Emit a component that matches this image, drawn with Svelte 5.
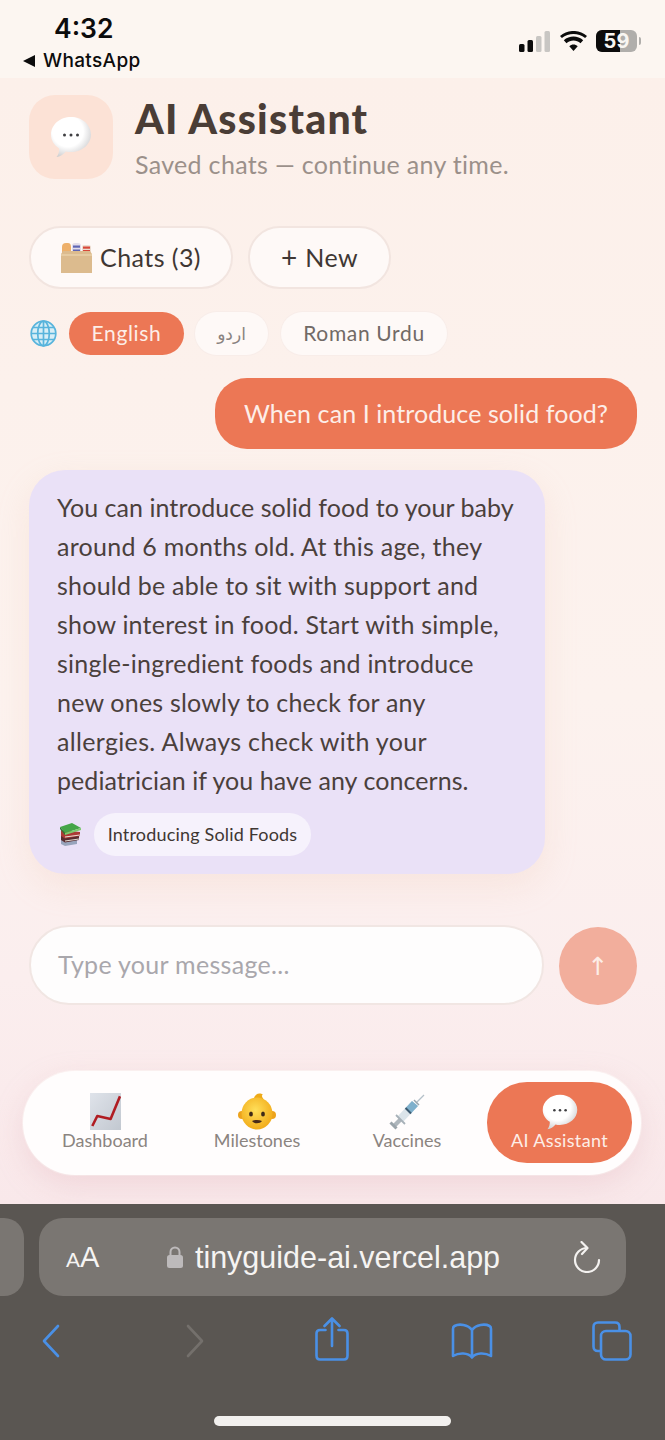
<script>
  const lines = [
    { text: 'You can introduce solid food to your baby', track: 0.05 },
    { text: 'around 6 months old. At this age, they', track: 0.26 },
    { text: 'should be able to sit with support and', track: 0.23 },
    { text: 'show interest in food. Start with simple,', track: 0.22 },
    { text: 'single-ingredient foods and introduce', track: 0.23 },
    { text: 'new ones slowly to check for any', track: 0.2 },
    { text: 'allergies. Always check with your', track: 0.34 },
    { text: 'pediatrician if you have any concerns.', track: 0.07 }
  ];
</script>

{#snippet bubble(size)}
  <svg width={size} height={size} viewBox="0 0 44 44" aria-hidden="true">
    <defs>
      <radialGradient id="bub" cx="0.42" cy="0.36" r="0.7">
        <stop offset="0.55" stop-color="#ffffff" />
        <stop offset="1" stop-color="#c9c9cb" />
      </radialGradient>
    </defs>
    <path d="M22 2C33 2 42 9.800 42 19.500C42 29.200 33 37 22 37C20 37 18.500 36.800 16.800 36.400C14.500 39.300 11 41.500 7.500 42C9.500 39.500 10.300 36.500 10.200 33.400C5 30.200 2 25.200 2 19.500C2 9.800 11 2 22 2Z" fill="url(#bub)" />
    <circle cx="15.500" cy="20" r="1.500" fill="#3f3f42" />
    <circle cx="22" cy="20" r="1.500" fill="#3f3f42" />
    <circle cx="28.500" cy="20" r="1.500" fill="#3f3f42" />
  </svg>
{/snippet}

<div class="screen">
  <header class="status">
    <div class="status-left">
      <div class="time">4:32</div>
      <div class="back-app"><span class="tri"></span>WhatsApp</div>
    </div>
    <div class="status-right">
      <svg width="32" height="21" viewBox="0 0 32 21" aria-hidden="true">
        <rect x="0" y="13" width="5.500" height="8" rx="1.500" fill="#0c0c0c" />
        <rect x="8.500" y="9" width="5.500" height="12" rx="1.500" fill="#0c0c0c" />
        <rect x="17" y="5" width="5.500" height="16" rx="1.500" fill="#c8c6c3" />
        <rect x="25.500" y="0" width="5.500" height="21" rx="1.500" fill="#c8c6c3" />
      </svg>
      <svg width="27" height="20" viewBox="0 0 27 20" aria-hidden="true">
        <path d="M13.500 20L9.300 15.200C11.700 13 15.300 13 17.700 15.200Z M6.500 12.200L3.800 9.200C9.300 4.200 17.700 4.200 23.200 9.200L20.500 12.200C16.500 8.700 10.500 8.700 6.500 12.200Z M1.900 7.100L0 4.900C7.700 -1.700 19.300 -1.700 27 4.900L25.100 7.100C18.500 1.600 8.500 1.600 1.900 7.100Z" fill="#0c0c0c" />
      </svg>
      <div class="battery">
        <span class="bat-fill"></span>
        <span class="bat-num">59</span>
        <span class="bat-tip"></span>
      </div>
    </div>
  </header>

  <main class="page">
    <section class="head">
      <div class="head-icon">{@render bubble(44)}</div>
      <div class="head-text">
        <h1>AI Assistant</h1>
        <p>Saved chats — continue any time.</p>
      </div>
    </section>

    <section class="actions">
      <button class="act act-chats">
        <svg width="31" height="31" viewBox="0 0 31 31" aria-hidden="true">
          <path d="M1 11V5Q1 1 5 1H7Q10 1 10 5V11Z" fill="#eeb06a" />
          <path d="M11 11V4Q11 1 14 1H17Q20 1 20 4V11Z" fill="#e2dcea" />
          <rect x="12" y="3.500" width="7" height="2.200" fill="#5f66b4" />
          <rect x="12" y="7.500" width="7" height="2.200" fill="#5f66b4" />
          <path d="M21 11V5Q21 3 23 3H27Q30 3 30 5V11Z" fill="#ecdcd0" />
          <rect x="22" y="4.500" width="7" height="2.200" fill="#d8483a" />
          <rect x="22" y="8" width="7" height="2.200" fill="#d8483a" />
          <path d="M2 9H29L31 12V31H0V12Z" fill="#dcbb8e" />
          <path d="M0 12H31V14H0Z" fill="#e6cba2" />
        </svg>
        <span class="act-label">Chats (3)</span>
      </button>
      <button class="act act-new"><span class="plus">+</span> <span class="act-label">New</span></button>
    </section>

    <section class="langs">
      <svg width="27" height="27" viewBox="0 0 27 27" fill="none" stroke="#58b4dc" stroke-width="1.700" aria-hidden="true">
        <circle cx="13.500" cy="13.500" r="12.300" fill="#d8eef6" />
        <ellipse cx="13.500" cy="13.500" rx="5.800" ry="12.300" />
        <path d="M13.500 1.200V25.800M1.200 13.500H25.800M3 7.500H24M3 19.500H24" />
      </svg>
      <span class="chip chip-on"><span class="chip-label">English</span></span>
      <span class="chip chip-urdu" dir="rtl">اردو</span>
      <span class="chip chip-roman"><span class="chip-label">Roman Urdu</span></span>
    </section>

    <div class="user-row">
      <div class="user-msg"><span class="user-label">When can I introduce solid food?</span></div>
    </div>

    <article class="ai-msg">
      <div class="ai-text">
        {#each lines as line}
          <div style="letter-spacing: {line.track}px">{line.text}</div>
        {/each}
      </div>
      <div class="source">
        <svg class="books" width="22" height="23" viewBox="0 0 22 23" aria-hidden="true">
          <path d="M2 15L18 17V21L6 23L2 21Z" fill="#98a4bc" />
          <path d="M2 11L20 13V17L6 19.500L2 17Z" fill="#5a2c30" />
          <path d="M6 17.500L20 15.500V16.500L6 18.500Z" fill="#e6dcd2" />
          <path d="M2 7L21 9V13L6 15.500L2 13Z" fill="#ac3a36" />
          <path d="M6 13.500L21 11.500V12.500L6 14.500Z" fill="#eadfd6" />
          <path d="M1 4L13 0L22 5L6 10Z" fill="#45a548" />
          <path d="M1 4L6 10V12L1 6Z" fill="#2c7a34" />
          <path d="M6 10L22 5V7L6 12Z" fill="#7ccb6c" />
        </svg>
        <span class="source-chip"><span class="source-label">Introducing Solid Foods</span></span>
      </div>
    </article>

    <section class="composer">
      <div class="input">Type your message...</div>
      <button class="send" aria-label="Send">↑</button>
    </section>

    <nav class="nav">
      <div class="nav-item">
        <svg class="nav-ico" width="31" height="37" viewBox="0 0 31 37" aria-hidden="true">
          <defs>
            <linearGradient id="chartbg" x1="0" y1="0" x2="1" y2="1">
              <stop offset="0" stop-color="#dfe3ea" />
              <stop offset="1" stop-color="#c2c8d0" />
            </linearGradient>
          </defs>
          <rect x="0" y="0" width="31" height="37" fill="url(#chartbg)" />
          <path d="M2.300 33L7.300 23L20.600 26L30 3.300" fill="none" stroke="#b01c22" stroke-width="2.600" stroke-linejoin="round" />
        </svg>
        <span>Dashboard</span>
      </div>
      <div class="nav-item">
        <svg class="nav-ico" width="40" height="37" viewBox="0 0 40 37" aria-hidden="true">
          <defs>
            <radialGradient id="babyf" cx="0.45" cy="0.4" r="0.7">
              <stop offset="0" stop-color="#ffdf5a" />
              <stop offset="1" stop-color="#f0a410" />
            </radialGradient>
          </defs>
          <circle cx="5" cy="22" r="4" fill="#eda31c" />
          <circle cx="35" cy="22" r="4" fill="#eda31c" />
          <path d="M17 5C18 1 23 -1 26 2C24 2 25 4 27 7Z" fill="#eeaa18" />
          <ellipse cx="20" cy="20.500" rx="15.500" ry="16" fill="url(#babyf)" />
          <ellipse cx="14" cy="21" rx="1.900" ry="2.600" fill="#3f2a18" />
          <ellipse cx="26" cy="21" rx="1.900" ry="2.600" fill="#3f2a18" />
          <path d="M15 28C18 26.500 22 26.500 25 28C23 31 17 31 15 28Z" fill="#4a2a18" />
        </svg>
        <span>Milestones</span>
      </div>
      <div class="nav-item">
        <svg class="nav-ico" width="36" height="37" viewBox="0 0 36 37" aria-hidden="true">
          <path d="M27 10L35 2" stroke="#b4c0c8" stroke-width="1.200" />
          <path d="M8 24L23 8L29 13L14 29Z" fill="#dbe4ea" />
          <path d="M16.500 15L23 8L29 13L22 20.500Z" fill="#7fb0cc" />
          <path d="M16.500 15L22 20.500" stroke="#3d5a70" stroke-width="2" />
          <path d="M25 7L30 12" stroke="#98a6ae" stroke-width="1.500" />
          <path d="M10 25L13 28L7 34L4 31Z" fill="#aeb6bc" />
          <path d="M1.500 29.500L7.500 35.500" stroke="#9aa4aa" stroke-width="3" />
          <path d="M7 22L16 31" stroke="#a7b1b8" stroke-width="1.800" />
        </svg>
        <span>Vaccines</span>
      </div>
      <div class="nav-item nav-on">
        <span class="nav-ico">{@render bubble(38)}</span>
        <span class="nav-on-label">AI Assistant</span>
      </div>
    </nav>
  </main>

  <footer class="browser">
    <div class="url-row">
      <div class="tab-peek"></div>
      <div class="url">
        <span class="aa"><small>A</small>A</span>
        <span class="addr">
          <svg width="16" height="24" viewBox="0 0 16 24" aria-hidden="true">
            <path d="M3.500 11V7A4.500 4.500 0 0 1 12.500 7V11" fill="none" stroke="#bdbabb" stroke-width="2" />
            <rect x="0" y="10" width="16" height="13" rx="2.500" fill="#bdbabb" />
          </svg>
          tinyguide-ai.vercel.app
        </span>
        <svg width="28" height="32" viewBox="0 0 28 32" fill="none" stroke="#f4f2f0" stroke-width="2.200" aria-hidden="true">
          <path d="M14 7A12 12 0 1 0 26 19" stroke-linecap="round" />
          <path d="M8.500 1L14.500 7L9 13" stroke-linecap="round" stroke-linejoin="round" />
        </svg>
      </div>
    </div>
    <div class="tools">
      <svg class="t-back" width="20" height="34" viewBox="0 0 20 34" fill="none" stroke="#4a90e6" stroke-width="2.600" aria-hidden="true"><path d="M17 2L3 17L17 32" stroke-linecap="round" stroke-linejoin="round" /></svg>
      <svg class="t-fwd" width="20" height="34" viewBox="0 0 20 34" fill="none" stroke="#74706c" stroke-width="2.600" aria-hidden="true"><path d="M3 2L17 17L3 32" stroke-linecap="round" stroke-linejoin="round" /></svg>
      <svg class="t-share" width="34" height="44" viewBox="0 0 34 44" fill="none" stroke="#4a90e6" stroke-width="2.600" aria-hidden="true">
        <path d="M10.500 13H5Q1.500 13 1.500 16.500V38.500Q1.500 42.500 5 42.500H29Q32.500 42.500 32.500 38.500V16.500Q32.500 13 29 13H23.500" stroke-linecap="round" />
        <path d="M17 29V2M9.500 9L17 1.500L24.500 9" stroke-linecap="round" stroke-linejoin="round" />
      </svg>
      <svg class="t-book" width="42" height="36" viewBox="0 0 42 36" fill="none" stroke="#4a90e6" stroke-width="2.600" aria-hidden="true">
        <path d="M21 7C17 1.500 8 0.500 3.500 3C2 3.800 2 5 2 6V33C8 29.500 17 29.500 21 34.500C25 29.500 34 29.500 40 33V6C40 5 40 3.800 38.500 3C34 0.500 25 1.500 21 7V34" stroke-linejoin="round" />
      </svg>
      <svg class="t-tabs" width="40" height="40" viewBox="0 0 40 40" fill="none" stroke="#4a90e6" stroke-width="2.600" aria-hidden="true">
        <path d="M9 30H6Q1.500 30 1.500 25.500V6Q1.500 1.500 6 1.500H23Q27.500 1.500 27.500 6V9" />
        <rect x="9" y="10" width="29.500" height="28.500" rx="5" />
      </svg>
    </div>
    <div class="home-wrap"><div class="home"></div></div>
  </footer>
</div>

<style>
  :global(body) {
    margin: 0;
    background: #fcf6f1;
  }
  .screen {
    width: 665px;
    height: 1440px;
    overflow: hidden;
    display: flex;
    flex-direction: column;
    font-family: "Lato", "Noto Sans", sans-serif;
    color: #3f3733;
  }

  .status {
    height: 78px;
    flex: none;
    box-sizing: border-box;
    background: #fcf6f1;
    display: flex;
    justify-content: space-between;
    padding: 13px 28px 0 23px;
    font-family: "Inter", sans-serif;
    color: #0c0c0c;
  }
  .time {
    font-size: 26.500px;
    line-height: 30px;
    font-weight: 600;
    padding-left: 31px;
  }
  .back-app {
    display: flex;
    align-items: center;
    font-size: 19px;
    line-height: 24px;
    font-weight: 500;
    margin-top: 6px;
    letter-spacing: 0.35px;
  }
  .tri {
    width: 0;
    height: 0;
    border-top: 6px solid transparent;
    border-bottom: 6px solid transparent;
    border-right: 12px solid #0c0c0c;
    margin-right: 8px;
  }
  .status-right {
    display: flex;
    align-items: center;
    gap: 9px;
    height: 36px;
    margin-top: 10px;
  }
  .battery {
    position: relative;
    width: 41px;
    height: 22px;
    border-radius: 6px;
    background: #b0aeab;
  }
  .bat-fill {
    position: absolute;
    left: 0;
    top: 0;
    bottom: 0;
    width: 24px;
    background: #0c0c0c;
    border-radius: 6px 0 0 6px;
  }
  .bat-num {
    position: absolute;
    inset: 0;
    text-align: center;
    color: #f8f6f2;
    font-size: 20px;
    line-height: 22px;
    font-weight: 700;
  }
  .bat-tip {
    position: absolute;
    right: -4px;
    top: 7px;
    width: 2px;
    height: 8px;
    background: #b0aeab;
    border-radius: 0 2px 2px 0;
  }

  .page {
    flex: 1;
    box-sizing: border-box;
    padding: 17px 0 0;
    background: linear-gradient(180deg, #fcf0ea 0%, #fcf2ee 55%, #fbeeee 80%, #f9e8ea 100%);
    display: flex;
    flex-direction: column;
  }

  .head {
    display: flex;
    gap: 22px;
    padding: 0 29px;
    height: 84px;
  }
  .head-icon {
    width: 84px;
    height: 84px;
    flex: none;
    border-radius: 26px;
    background: #fce2d6;
    display: flex;
    align-items: center;
    justify-content: center;
  }
  h1 {
    margin: 0;
    font-size: 41px;
    line-height: 48px;
    font-weight: 900;
    color: #4a3d36;
    letter-spacing: 1.250px;
  }
  .head-text p {
    margin: 3px 0 0;
    font-size: 25px;
    line-height: 36px;
    color: #9b908a;
    letter-spacing: 0.320px;
  }

  .actions {
    display: flex;
    gap: 15px;
    padding: 0 29px;
    margin-top: 47px;
  }
  .act {
    height: 63px;
    box-sizing: border-box;
    border-radius: 32px;
    border: 2px solid #f2e5e0;
    background: #fef9f7;
    font-family: inherit;
    font-size: 25px;
    color: #3f3733;
    display: flex;
    align-items: center;
    justify-content: center;
    padding: 0;
  }
  .act-label {
    letter-spacing: 0.450px;
    position: relative;
    top: -1px;
  }
  .act-chats {
    width: 204px;
    gap: 8px;
  }
  .act-new {
    width: 143px;
    gap: 8px;
  }
  .plus {
    font-size: 28px;
    font-weight: 400;
    position: relative;
    top: -1px;
  }

  .langs {
    display: flex;
    align-items: center;
    padding: 0 0 0 30px;
    margin-top: 23px;
    height: 43px;
  }
  .chip {
    height: 43px;
    box-sizing: border-box;
    border-radius: 22px;
    display: flex;
    align-items: center;
    justify-content: center;
    font-size: 21px;
    background: #fef9f7;
    color: #716a66;
    box-shadow: 0 0 0 1px #f8ede9;
  }
  .chip-label {
    letter-spacing: 0.650px;
    position: relative;
    top: -1px;
  }
  .chip-on {
    width: 115px;
    margin-left: 12px;
    background: #ec7755;
    color: #fdeee8;
    box-shadow: none;
  }
  .chip-urdu {
    width: 73px;
    margin-left: 11px;
    font-family: "DejaVu Sans", sans-serif;
    font-size: 17px;
    color: #8a8380;
  }
  .chip-roman {
    width: 166px;
    margin-left: 13px;
  }

  .user-row {
    display: flex;
    justify-content: flex-end;
    padding: 0 28px 0 0;
    margin-top: 23px;
  }
  .user-msg {
    width: 422px;
    height: 71px;
    box-sizing: border-box;
    border-radius: 32px;
    background: #ec7755;
    color: #fdeee8;
    font-size: 25px;
    display: flex;
    align-items: center;
    justify-content: center;
    white-space: nowrap;
  }
  .user-label {
    letter-spacing: 0.090px;
    position: relative;
    top: -1px;
  }

  .ai-msg {
    width: 516px;
    height: 404px;
    box-sizing: border-box;
    margin: 21px 0 0 29px;
    padding: 18px 0 0 28px;
    border-radius: 36px;
    background: #eae1f7;
    box-shadow: 0 12px 32px rgba(236, 190, 170, 0.22);
  }
  .ai-text {
    font-size: 25px;
    line-height: 39px;
    color: #4a403c;
    white-space: nowrap;
  }
  .source {
    display: flex;
    align-items: center;
    margin-top: 13px;
    height: 43px;
  }
  .books {
    margin: 0 13px 0 2px;
    flex: none;
  }
  .source-chip {
    height: 43px;
    width: 217px;
    border-radius: 22px;
    background: #f6f2fc;
    display: flex;
    align-items: center;
    justify-content: center;
    font-size: 18px;
    color: #3f3733;
    white-space: nowrap;
  }
  .source-label {
    letter-spacing: 0.180px;
    position: relative;
    top: -1px;
  }

  .composer {
    display: flex;
    align-items: center;
    gap: 15px;
    padding: 0 28px 0 29px;
    margin-top: 51px;
  }
  .input {
    width: 515px;
    height: 80px;
    box-sizing: border-box;
    border-radius: 40px;
    border: 2px solid #f1e6e3;
    background: #fefdfd;
    padding: 0 0 2px 27px;
    display: flex;
    align-items: center;
    font-size: 25px;
    letter-spacing: 0.300px;
    color: #a9a7ac;
  }
  .send {
    width: 78px;
    height: 78px;
    flex: none;
    border: 0;
    padding: 0;
    border-radius: 50%;
    background: #f2ae9c;
    color: #fdeee8;
    font-family: "DejaVu Sans", sans-serif;
    font-size: 25px;
    margin-top: 2px;
  }

  .nav {
    width: 618px;
    height: 104px;
    box-sizing: border-box;
    margin: 66px 0 0 23px;
    border-radius: 52px;
    background: #fffdfd;
    box-shadow: 0 10px 28px rgba(225, 180, 190, 0.35), 0 0 0 1px #fdf6f5;
    display: grid;
    grid-template-columns: 164px 140px 160px 145px;
    padding: 11px 9px 12px 0;
    align-items: start;
  }
  .nav-item {
    display: flex;
    flex-direction: column;
    align-items: center;
    font-size: 18px;
    line-height: 20px;
    color: #8b8480;
    white-space: nowrap;
    padding-top: 11px;
  }
  .nav-ico {
    display: block;
    height: 37px;
  }
  .nav-on {
    background: #ec7755;
    color: #fdeee8;
    border-radius: 40px;
    height: 81px;
    box-sizing: border-box;
  }
  .nav-on .nav-ico {
    height: 35px;
    margin-bottom: 2px;
  }
  .nav-on-label {
    letter-spacing: 0.350px;
  }

  .browser {
    height: 236px;
    flex: none;
    background: #5a5652;
    box-sizing: border-box;
    padding-top: 14px;
    display: flex;
    flex-direction: column;
  }
  .url-row {
    display: flex;
    gap: 15px;
    height: 78px;
  }
  .tab-peek {
    width: 24px;
    flex: none;
    background: #7a7672;
    border-radius: 0 20px 20px 0;
  }
  .url {
    width: 587px;
    background: #7a7672;
    border-radius: 24px;
    display: flex;
    align-items: center;
    color: #f6f4f2;
    box-sizing: border-box;
    padding: 0 25px 0 27px;
  }
  .aa {
    font-family: "Liberation Sans", sans-serif;
    font-size: 29px;
    width: 36px;
    white-space: nowrap;
  }
  .aa small {
    font-size: 21px;
  }
  .addr {
    flex: 1;
    display: flex;
    align-items: center;
    justify-content: center;
    gap: 12px;
    font-family: "Liberation Sans", sans-serif;
    font-size: 30.500px;
    white-space: nowrap;
    padding-right: 8px;
  }
  .tools {
    height: 90px;
    display: flex;
    align-items: center;
  }
  .tools svg {
    flex: none;
  }
  .t-back { margin-left: 41px; }
  .t-fwd { margin-left: 124px; }
  .t-share { margin-left: 110px; margin-top: -4px; }
  .t-book { margin-left: 102px; }
  .t-tabs { margin-left: 99px; }
  .home-wrap {
    display: flex;
    justify-content: center;
    margin-top: 30px;
  }
  .home {
    width: 237px;
    height: 10px;
    border-radius: 5px;
    background: #f2f0ee;
  }
</style>
